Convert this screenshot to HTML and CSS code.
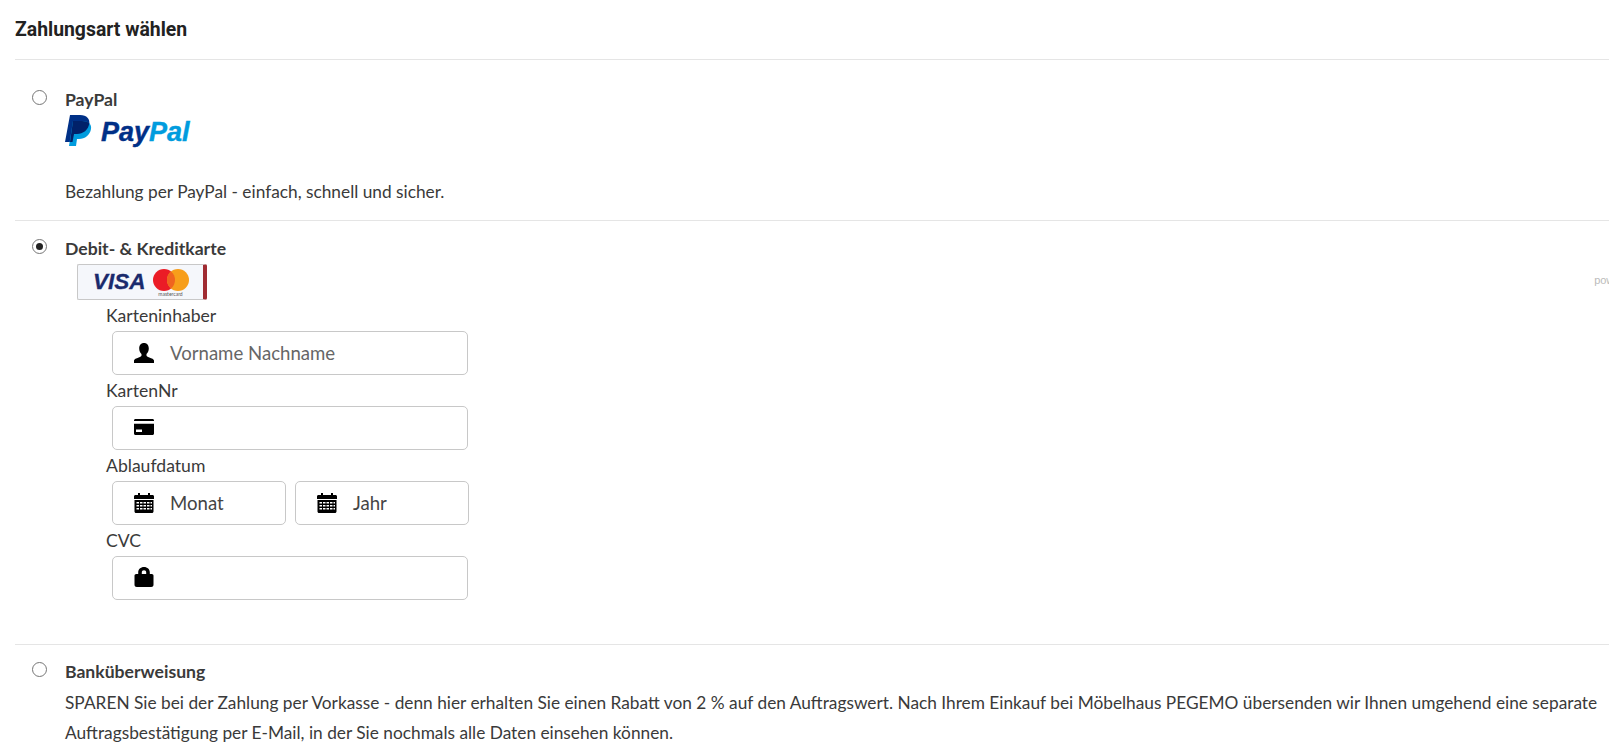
FILE: index.html
```html
<!DOCTYPE html>
<html lang="de">
<head>
    <meta charset="UTF-8">
    <title>Zahlungsart wählen</title>
    <link rel="stylesheet" href="styles.css">
</head>
<body>
    <div class="container">
        <h2 class="page-title">Zahlungsart wählen</h2>

        <!-- PayPal -->
        <div class="method method-paypal">
            <span class="radio"></span>
            <div class="method-body">
                <div class="method-name">PayPal</div>
                <div class="paypal-logo">
                    <svg class="paypal-mark" width="27" height="31" viewBox="0 0 27 31">
                        <path fill="#003087" d="M5 0h10c7 0 10 4 9.300 9-1 7-6.300 10-12.300 10H9l-1.500 8H0z"/>
                        <path fill="#009cde" d="M8 6h9c6 0 10 3 9 8-1 6-6 10-12 10h-2l-1 7H4z"/>
                        <path fill="#012169" d="M8 6h9c3 0 5.500.7 7.300 2-.8 7-6.300 11-12.300 11H9l-1.500 8H5z"/>
                    </svg>
                    <span class="paypal-word"><span class="pay">Pay</span><span class="pal">Pal</span></span>
                </div>
                <p class="method-text method-text-paypal">Bezahlung per PayPal - einfach, schnell und sicher.</p>
            </div>
        </div>

        <!-- Kreditkarte -->
        <div class="method method-card">
            <span class="radio checked"></span>
            <div class="method-body">
                <div class="method-name">Debit- &amp; Kreditkarte</div>
                <div class="card-logo-row">
                    <div class="card-badge">
                        <span class="visa">VISA</span>
                        <div class="mc">
                            <svg width="36" height="22" viewBox="0 0 36 22">
                                <circle cx="11" cy="11" r="11" fill="#eb1c26"/>
                                <circle cx="25" cy="11" r="11" fill="#f79e1b"/>
                                <path fill="#f0641f" d="M18 2.500a11 11 0 0 1 0 17 11 11 0 0 1 0-17z"/>
                            </svg>
                            <span class="mc-word">mastercard</span>
                        </div>
                    </div>
                    <span class="powered">powered by</span>
                </div>

                <form class="card-form">
                    <label class="field-label">Karteninhaber</label>
                    <div class="input-box">
                        <svg class="icon" width="20" height="20" viewBox="0 0 20 20">
                            <path d="M10 0c3 0 4.800 2.200 4.800 5.400 0 2.300-1 4.400-2.300 5.600v1.500c0 .8 1 1.200 2.800 1.900 2.400.9 4.700 1.700 4.700 3.200V20H0v-2.400c0-1.500 2.300-2.300 4.700-3.200 1.800-.7 2.800-1.100 2.800-1.900V11C6.200 9.800 5.200 7.700 5.200 5.400 5.200 2.200 7 0 10 0z"/>
                        </svg>
                        <span class="placeholder">Vorname Nachname</span>
                    </div>

                    <label class="field-label">KartenNr</label>
                    <div class="input-box">
                        <svg class="icon icon-card" width="20" height="16" viewBox="0 0 20 16">
                            <path fill-rule="evenodd" d="M1.500 0h17c.8 0 1.500.6 1.500 1.400V2H0v-.6C0 .6.700 0 1.500 0zM0 4.800h20v9.700c0 .8-.7 1.500-1.500 1.500h-17C.7 16 0 15.300 0 14.500zM2 10.500v2.500h6v-2.500z"/>
                        </svg>
                    </div>

                    <label class="field-label">Ablaufdatum</label>
                    <div class="date-row">
                        <div class="input-box">
                            <svg class="icon" width="20" height="20" viewBox="0 0 20 20">
                                <use href="#calendar"/>
                            </svg>
                            <span class="value">Monat</span>
                        </div>
                        <div class="input-box">
                            <svg class="icon" width="20" height="20" viewBox="0 0 20 20">
                                <use href="#calendar"/>
                            </svg>
                            <span class="value">Jahr</span>
                        </div>
                    </div>

                    <label class="field-label">CVC</label>
                    <div class="input-box">
                        <svg class="icon icon-lock" width="20" height="20" viewBox="0 0 20 20">
                            <path fill-rule="evenodd" d="M10 0c3.400 0 5.800 2.400 5.800 5.400V7h2c1 0 1.700.8 1.700 1.700v9c0 1.300-1 2.300-2.300 2.300H2.800C1.500 20 .5 19 .5 17.700v-9C.5 7.800 1.200 7 2.200 7h2V5.400C4.200 2.400 6.600 0 10 0zm0 3.200c-1.400 0-2.200.9-2.200 2.200V7h4.400V5.400c0-1.300-.8-2.200-2.200-2.200z"/>
                        </svg>
                    </div>
                </form>
            </div>
        </div>

        <!-- Vorkasse -->
        <div class="method method-bank">
            <span class="radio"></span>
            <div class="method-body">
                <div class="method-name">Banküberweisung</div>
                <p class="method-text method-text-bank">SPAREN Sie bei der Zahlung per Vorkasse - denn hier erhalten Sie einen Rabatt von 2 % auf den Auftragswert. Nach Ihrem Einkauf bei Möbelhaus PEGEMO übersenden wir Ihnen umgehend eine separate Auftragsbestätigung per E-Mail, in der Sie nochmals alle Daten einsehen können.</p>
            </div>
        </div>
    </div>

    <!-- shared icon -->
    <svg class="icon-defs" width="0" height="0">
        <symbol id="calendar" viewBox="0 0 20 20">
            <path d="M4 0h2v2h8V0h2v2h2.500c.8 0 1.500.6 1.500 1.400V6H0V3.400C0 2.600.7 2 1.500 2H4z"/>
            <path fill-rule="evenodd" d="M.5 7h19v11.500c0 .8-.7 1.500-1.500 1.500H2c-.8 0-1.500-.7-1.500-1.500zM2.500 9v1.500H5V9zm3.500 0v1.500h2.500V9zm3.500 0v1.500H12V9zM13 9v1.500h2.500V9zm3.500 0v1.500H18V9zM2.500 12v1.500H5V12zm3.500 0v1.500h2.500V12zm3.500 0v1.500H12V12zm3.500 0v1.500h2.500V12zm3.500 0v1.500H18V12zM2.500 15v1.500H5V15zm3.500 0v1.500h2.500V15zm3.500 0v1.500H12V15zm3.500 0v1.500h2.500V15zm3.500 0v1.500H18V15z"/>
        </symbol>
    </svg>
</body>
</html>
```

FILE: styles.css
```css
/* General */
html, body {
    overflow-x: hidden;
}

body {
    margin: 0;
    font-family: 'Lato', sans-serif;
    font-size: 17.3px;
    color: #3a3a3a;
    background: #fff;
}

.container {
    padding-left: 15px;
}

.page-title {
    margin: 0;
    height: 59px;
    line-height: 60px;
    font-family: 'Roboto', sans-serif;
    font-size: 19.4px;
    font-weight: 700;
    color: #222;
    border-bottom: 1px solid #e5e5e5;
    box-sizing: content-box;
}

/* Payment methods */
.method {
    display: flex;
    align-items: flex-start;
    border-bottom: 1px solid #e5e5e5;
}

.method-paypal {
    height: 161px;
    padding-top: 28px;
    box-sizing: border-box;
}

.method-card {
    height: 424px;
    padding-top: 16px;
    box-sizing: border-box;
}

.method-bank {
    border-bottom: none;
    padding-top: 15px;
}

.radio {
    flex: none;
    width: 15px;
    height: 15px;
    margin: 2px 18px 0 17px;
    border: 1px solid #767676;
    border-radius: 50%;
    box-sizing: border-box;
    position: relative;
}

.radio.checked::after {
    content: "";
    position: absolute;
    top: 3px;
    left: 3px;
    width: 7px;
    height: 7px;
    border-radius: 50%;
    background: #222;
}

.method-body {
    flex: 1;
}

.method-name {
    font-weight: 700;
    line-height: 24px;
    font-size: 17.6px;
}

.method-text {
    margin: 0;
    line-height: 30px;
}

.method-text-paypal {
    margin-top: 31px;
}

.method-text-bank {
    margin-top: 4px;
}

/* PayPal logo */
.paypal-logo {
    display: flex;
    align-items: center;
    height: 31px;
    margin-top: 3px;
}

.paypal-mark {
    flex: none;
}

.paypal-word {
    margin-top: 4px;
    margin-left: 9px;
    font-family: 'Liberation Sans', sans-serif;
    font-size: 27px;
    font-weight: 700;
    font-style: italic;
    -webkit-text-stroke: 0.4px;
}

.pay {
    color: #003087;
}

.pal {
    color: #009cde;
}

/* Card logos */
.card-logo-row {
    display: flex;
    justify-content: space-between;
    align-items: center;
    margin-right: -42px;
    margin-top: 3px;
}

.card-badge {
    display: flex;
    align-items: center;
    gap: 7px;
    width: 130px;
    height: 36px;
    margin-left: 12px;
    padding-left: 15px;
    box-sizing: border-box;
    background: #f5f7fb;
    border: 1px solid #c8c8c8;
    border-right: 4px solid #a02c32;
    border-radius: 2px;
}

.visa {
    font-family: 'Liberation Sans', sans-serif;
    font-size: 22.5px;
    font-weight: 700;
    font-style: italic;
    color: #1a2a6c;
    -webkit-text-stroke: 0.3px;
}

.mc {
    display: flex;
    flex-direction: column;
    align-items: center;
    margin-top: 2px;
}

.mc-word {
    font-size: 5px;
    line-height: 6px;
    color: #555;
}

.powered {
    margin-bottom: 4px;
    font-family: 'Liberation Sans', sans-serif;
    font-size: 11px;
    color: #bbb;
    white-space: nowrap;
}

/* Form */
.card-form {
    margin-left: 41px;
    width: 362px;
}

.field-label {
    display: block;
    height: 31px;
    line-height: 31px;
    font-size: 17.6px;
}

.input-box {
    display: flex;
    align-items: center;
    height: 44px;
    margin-left: 6px;
    padding-left: 21px;
    box-sizing: border-box;
    border: 1px solid #c8c8c8;
    border-radius: 5px;
    font-size: 18.6px;
}

.date-row {
    display: flex;
    gap: 9px;
    margin-left: 6px;
    margin-right: -1px;
}

.date-row .input-box {
    flex: 1;
    margin-left: 0;
}

.icon {
    flex: none;
    margin-right: 16px;
}

.icon-card {
    margin-bottom: 3px;
}

.icon-lock {
    margin-bottom: 2px;
}

.placeholder {
    color: #666;
}

.value {
    color: #444;
}

.icon-defs {
    position: absolute;
}
```
